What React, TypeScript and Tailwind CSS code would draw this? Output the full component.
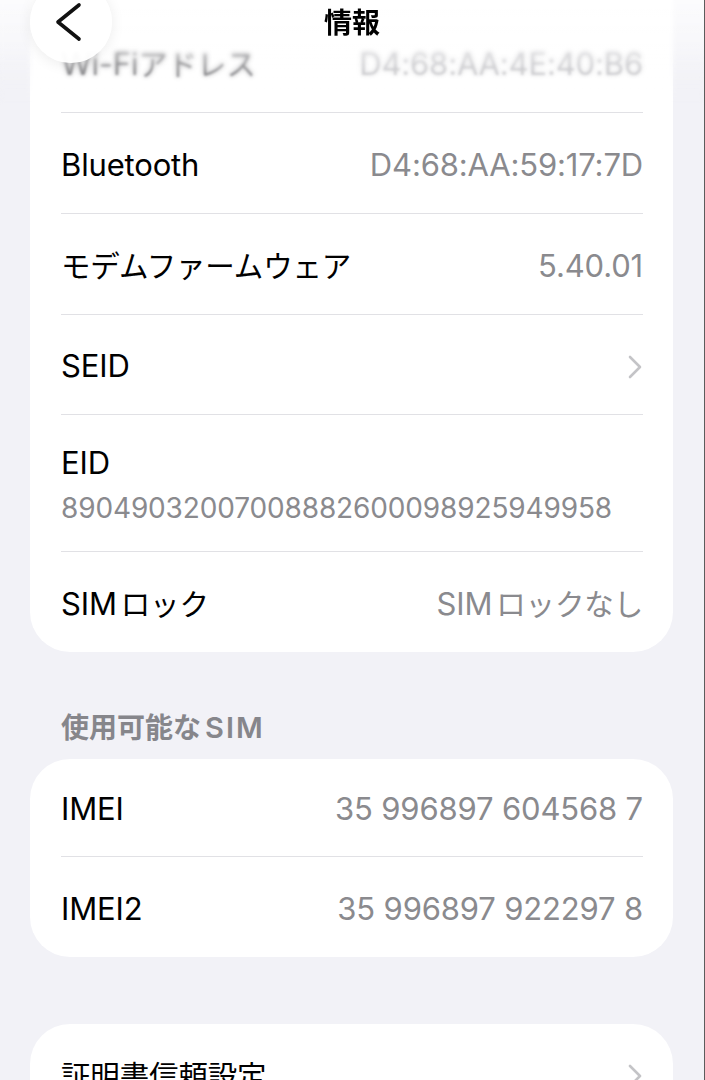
import React from "react";

const FONT = { fontFamily: '"Inter", "Noto Sans CJK JP", sans-serif' };

function Chevron() {
  return (
    <svg width="16" height="26" viewBox="0 0 16 26" fill="none" className="shrink-0">
      <path d="M3 3 L13 13 L3 23" stroke="#c4c4c7" strokeWidth="2.6" strokeLinecap="round" strokeLinejoin="round" />
    </svg>
  );
}

function Ja({ children }: { children: React.ReactNode }) {
  return <span className="text-[29.5px]">{children}</span>;
}

function Row({
  label,
  value,
  chevron,
  border = true,
  h = "h-[100px]",
}: {
  label: React.ReactNode;
  value?: React.ReactNode;
  chevron?: boolean;
  border?: boolean;
  h?: string;
}) {
  return (
    <div className="pl-[31px] pr-[30px]">
      <div
        className={`${h} pt-[4px] flex items-center justify-between ${border ? "border-b border-[#e1e1e5]" : ""}`}
      >
        <span className="text-[31px] text-black tracking-[-0.005em]">{label}</span>
        {value && <span className="text-[31px] text-[#8a8a8e] tracking-[-0.005em]">{value}</span>}
        {chevron && <Chevron />}
      </div>
    </div>
  );
}

export default function App() {
  return (
    <div
      className="relative w-[705px] h-[1080px] overflow-hidden bg-[#f2f2f7] border-r border-[#5c5c5c]"
      style={FONT}
    >
      {/* Card 1 */}
      <div className="ml-[30px] w-[643px] bg-white rounded-b-[40px] pt-[13px]">
        <div className="pl-[31px] pr-[30px]">
          <div className="h-[100px] pt-[4px] flex items-center justify-between border-b border-[#e1e1e5]">
            <span className="text-[31px] text-[#5a5a5e] tracking-[-0.005em] blur-[1.3px]">
              Wi-Fi<Ja>アドレス</Ja>
            </span>
            <span className="text-[31px] text-[#b9b9bd] tracking-[-0.005em] blur-[1.3px]">D4:68:AA:4E:40:B6</span>
          </div>
        </div>
        <Row label="Bluetooth" value="D4:68:AA:59:17:7D" h="h-[101px]" />
        <Row label={<Ja>モデムファームウェア</Ja>} value="5.40.01" h="h-[101px]" />
        <Row label="SEID" chevron h="h-[100px]" />
        <div className="pl-[31px] pr-[30px]">
          <div className="h-[137px] pt-[4px] flex flex-col justify-center border-b border-[#e1e1e5]">
            <span className="text-[31px] leading-[40px] text-black tracking-[-0.005em]">EID</span>
            <span className="text-[28px] leading-[40px] mt-[5px] text-[#8a8a8e] tracking-[-0.005em]">
              89049032007008882600098925949958
            </span>
          </div>
        </div>
        <Row
          label={
            <>
              <span className="mr-[4px]">SIM</span>
              <Ja>ロック</Ja>
            </>
          }
          value={
            <>
              <span className="mr-[4px]">SIM</span>
              <Ja>ロックなし</Ja>
            </>
          }
          border={false}
          h="h-[100px]"
        />
      </div>

      {/* Section header */}
      <div className="pl-[61px] pt-[56px] pb-[11px]">
        <span className="block text-[28px] leading-[39px] font-semibold text-[#86868b]">
          使用可能な<span className="ml-[4px] text-[29px] tracking-[0.07em]">SIM</span>
        </span>
      </div>

      {/* Card 2 */}
      <div className="ml-[30px] w-[643px] bg-white rounded-[40px]">
        <Row label="IMEI" value="35 996897 604568 7" h="h-[98px]" />
        <Row label="IMEI2" value="35 996897 922297 8" border={false} h="h-[100px]" />
      </div>

      {/* Card 3 */}
      <div className="ml-[30px] w-[643px] bg-white rounded-[40px] mt-[67px]">
        <Row label={<Ja>証明書信頼設定</Ja>} chevron border={false} h="h-[100px]" />
      </div>

      {/* Nav bar overlay */}
      <div className="absolute left-0 top-0 w-full h-[105px] bg-gradient-to-b from-[rgba(255,255,255,0.75)] via-[rgba(255,255,255,0.35)] to-transparent backdrop-blur-[2px] [mask-image:linear-gradient(to_bottom,black_45%,transparent)] pointer-events-none" />
      <div className="absolute left-0 top-[3px] w-full flex justify-center pointer-events-none">
        <span className="text-[28px] leading-[40px] font-bold text-black">情報</span>
      </div>
      <div className="absolute left-[30px] top-[-19px] w-[82px] h-[82px] rounded-full bg-white/95 shadow-[0_2px_14px_rgba(0,0,0,0.08)]">
        <svg width="82" height="82" viewBox="0 0 82 82" fill="none">
          <path d="M49 24 L28 41 L49 58" stroke="#111111" strokeWidth="3.6" strokeLinecap="round" strokeLinejoin="round" />
        </svg>
      </div>
    </div>
  );
}
